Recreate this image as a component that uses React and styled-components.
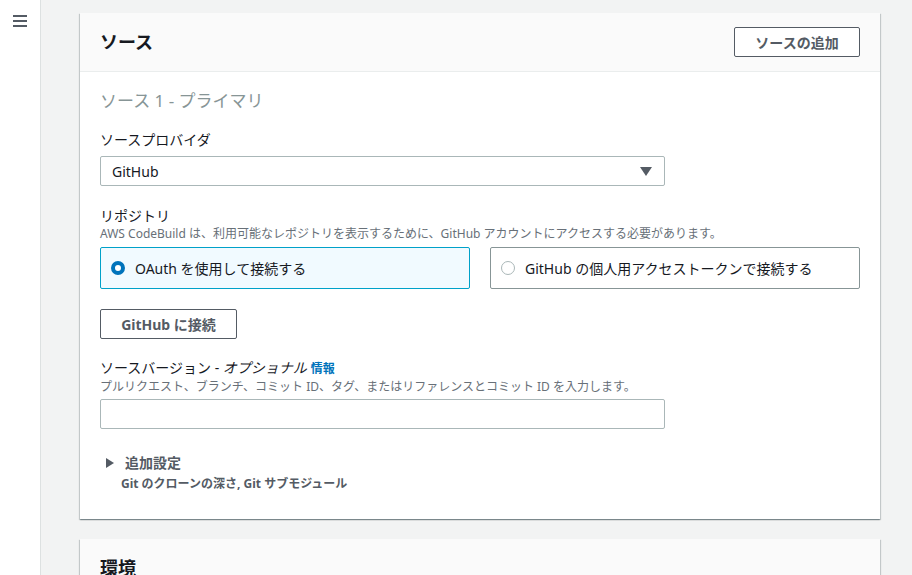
import React from "react";
import styled, { createGlobalStyle } from "styled-components";

const Global = createGlobalStyle`
  html, body { margin: 0; padding: 0; background: #f2f3f3; }
  body {
    font-family: "Noto Sans", "Noto Sans CJK JP", sans-serif;
    color: #16191f;
    -webkit-font-smoothing: antialiased;
  }
  * { box-sizing: border-box; }
`;

const Page = styled.div`
  display: flex;
  height: 575px;
  overflow: hidden;
`;

const Sidebar = styled.aside`
  width: 41px;
  flex: none;
  background: #fff;
  border-right: 1px solid #dde1e1;
  padding: 15px 0 0 13px;
`;

const Main = styled.main`
  flex: 1;
  padding: 13px 32px 0 39px;
  display: flex;
  flex-direction: column;
  gap: 20px;
`;

const Card = styled.section`
  background: #fff;
  box-shadow: 0 1px 1px 0 rgba(0, 28, 36, 0.3), 1px 1px 1px 0 rgba(0, 28, 36, 0.15),
    -1px 1px 1px 0 rgba(0, 28, 36, 0.15);
`;

const CardHeader = styled.header`
  height: 59px;
  background: #fafafa;
  border-bottom: 1px solid #eaeded;
  display: flex;
  align-items: center;
  justify-content: space-between;
  padding: 0 20px;
`;

const CardTitle = styled.h2`
  margin: 0;
  font-size: 18px;
  font-weight: 700;
  line-height: 22px;
  color: #16191f;
`;

const Button = styled.button`
  height: 30px;
  width: ${(p) => p.$w}px;
  background: #fff;
  border: 1px solid #545b64;
  border-radius: 2px;
  color: #545b64;
  font-family: inherit;
  font-size: 14px;
  font-weight: 700;
  padding: 0;
  cursor: pointer;
`;

const CardBody = styled.div`
  padding: 18px 20px 27px;
`;

const SubTitle = styled.h3`
  margin: 0 0 18px;
  font-size: 17px;
  font-weight: 400;
  line-height: 22px;
  color: #879596;
`;

const Field = styled.div`
  margin-top: ${(p) => p.$mt || 0}px;
  margin-bottom: ${(p) => p.$mb || 0}px;
`;

const Label = styled.div`
  font-size: 14px;
  line-height: 20px;
  color: #16191f;
`;

const Info = styled.a`
  color: #0073bb;
  font-weight: 700;
  font-size: 12px;
  margin-left: 4px;
  text-decoration: none;
`;

const Hint = styled.div`
  font-size: 12px;
  line-height: 16px;
  color: #687078;
  margin-bottom: ${(p) => p.$mb}px;
`;

const SelectBox = styled.div`
  margin-top: 6px;
  width: 565px;
  height: 30px;
  border: 1px solid #aab7b8;
  border-radius: 2px;
  display: flex;
  align-items: center;
  justify-content: space-between;
  padding: 0 12px 0 11px;
  font-size: 14px;
  color: #16191f;
`;

const Caret = styled.span`
  width: 0;
  height: 0;
  border-left: 6px solid transparent;
  border-right: 6px solid transparent;
  border-top: 9px solid #545b64;
`;

const Tiles = styled.div`
  display: grid;
  grid-template-columns: 1fr 1fr;
  gap: 20px;
  margin-bottom: 20px;
`;

const Tile = styled.label`
  height: 42px;
  border: 1px solid ${(p) => (p.$active ? "#00a1c9" : "#879596")};
  background: ${(p) => (p.$active ? "#f1faff" : "#fff")};
  border-radius: 2px;
  display: flex;
  align-items: center;
  gap: 10px;
  padding-left: 10px;
  font-size: 14px;
  color: #16191f;
`;

const Radio = styled.span`
  width: 14px;
  height: 14px;
  border-radius: 50%;
  flex: none;
  border: ${(p) => (p.$on ? "4px solid #0073bb" : "1px solid #aab7b8")};
  background: #fff;
`;

const TextInput = styled.input`
  display: block;
  width: 565px;
  height: 30px;
  border: 1px solid #aab7b8;
  border-radius: 2px;
  font-family: inherit;
  font-size: 14px;
  padding: 0 10px;
  outline: none;
`;

const Italic = styled.span`
  font-style: italic;
`;

const Expander = styled.div`
  padding-left: 6px;
`;

const ExpanderHead = styled.div`
  display: flex;
  align-items: center;
  gap: 11px;
  font-size: 14px;
  font-weight: 700;
  line-height: 20px;
  color: #545b64;
`;

const Tri = styled.span`
  width: 0;
  height: 0;
  border-top: 5px solid transparent;
  border-bottom: 5px solid transparent;
  border-left: 8px solid #545b64;
`;

const ExpanderDesc = styled.div`
  padding-left: 15px;
  margin-top: 3px;
  font-size: 12px;
  font-weight: 700;
  line-height: 16px;
  color: #545b64;
`;

const Burger = () => (
  <svg width="14" height="12" viewBox="0 0 14 12" style={{ display: "block" }}>
    <g stroke="#545b64" strokeWidth="2">
      <line x1="0" y1="1" x2="14" y2="1" />
      <line x1="0" y1="6" x2="14" y2="6" />
      <line x1="0" y1="11" x2="14" y2="11" />
    </g>
  </svg>
);

export default function App() {
  return (
    <>
      <Global />
      <Page>
        <Sidebar>
          <Burger />
        </Sidebar>
        <Main>
          <Card>
            <CardHeader>
              <CardTitle>ソース</CardTitle>
              <Button $w={126}>ソースの追加</Button>
            </CardHeader>
            <CardBody>
              <SubTitle>ソース 1 - プライマリ</SubTitle>
              <Field $mb={20}>
                <Label>ソースプロバイダ</Label>
                <SelectBox>
                  GitHub
                  <Caret />
                </SelectBox>
              </Field>
              <Field>
                <Label>リポジトリ</Label>
                <Hint $mb={5}>
                  AWS CodeBuild は、利用可能なレポジトリを表示するために、GitHub アカウントにアクセスする必要があります。
                </Hint>
                <Tiles>
                  <Tile $active>
                    <Radio $on />
                    OAuth を使用して接続する
                  </Tile>
                  <Tile>
                    <Radio />
                    GitHub の個人用アクセストークンで接続する
                  </Tile>
                </Tiles>
                <Button $w={137}>GitHub に接続</Button>
              </Field>
              <Field $mt={19} $mb={24}>
                <Label>
                  ソースバージョン - <Italic>オプショナル</Italic>
                  <Info>情報</Info>
                </Label>
                <Hint $mb={4}>
                  プルリクエスト、ブランチ、コミット ID、タグ、またはリファレンスとコミット ID を入力します。
                </Hint>
                <TextInput />
              </Field>
              <Expander>
                <ExpanderHead>
                  <Tri />
                  追加設定
                </ExpanderHead>
                <ExpanderDesc>Git のクローンの深さ, Git サブモジュール</ExpanderDesc>
              </Expander>
            </CardBody>
          </Card>
          <Card>
            <CardHeader>
              <CardTitle>環境</CardTitle>
            </CardHeader>
          </Card>
        </Main>
      </Page>
    </>
  );
}
